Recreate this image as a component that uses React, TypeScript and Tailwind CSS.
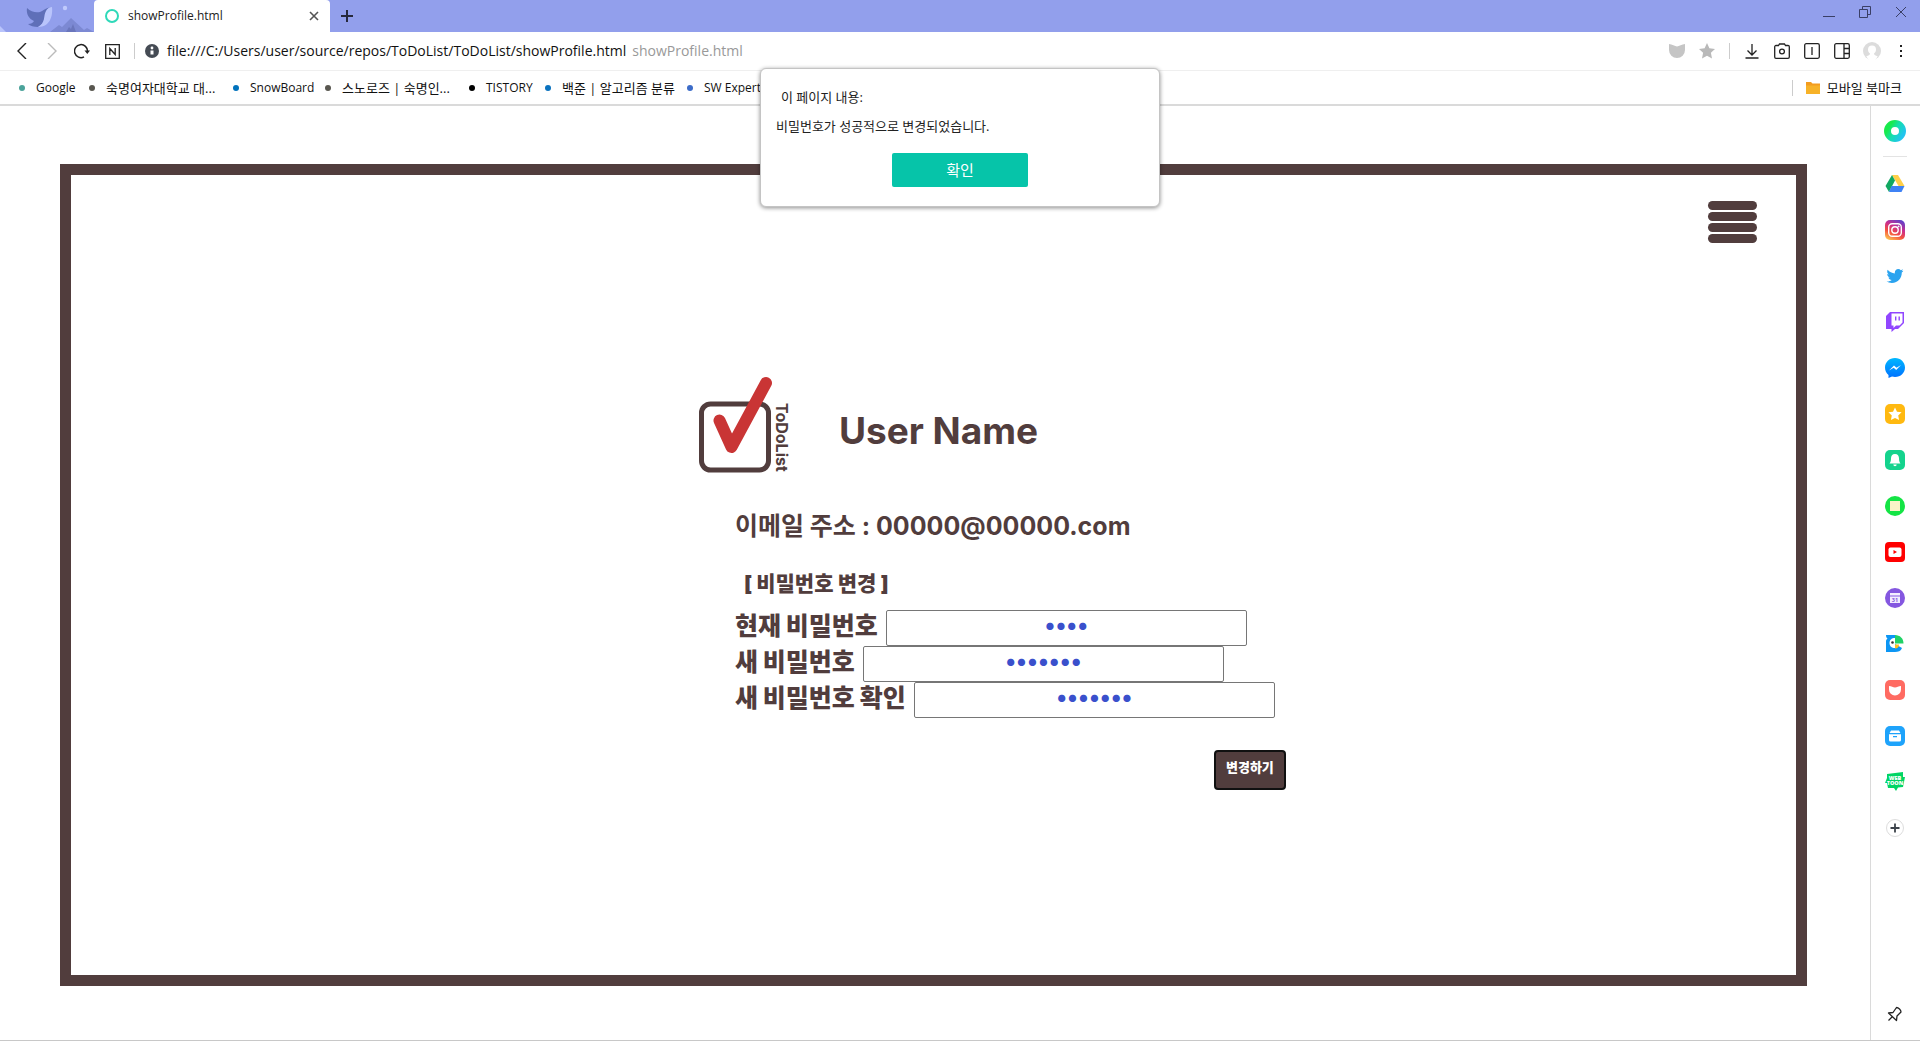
import React from "react";
import { FaTwitter } from "react-icons/fa";

const UI_FONT = "font-['Open_Sans','Noto_Sans_CJK_KR',sans-serif]";
const PAGE_FONT = "font-['Inter','Noto_Sans_CJK_KR',sans-serif]";

function TabBar() {
  return (
    <header className="flex h-8 bg-[#929fec]">
      <svg className="h-8 w-[94px] shrink-0" viewBox="0 0 94 32" aria-hidden="true">
        <path d="M0 26l6 6H0z" fill="#b9c4fb" />
        <path d="M50 32l9-7 3 2 9-9 13 12 3-2 7 4z" fill="#7c89d3" />
        <path d="M66 32l3-5 2 2 2-5 3 8z" fill="#6a76bc" />
        <circle cx="65" cy="8" r="2.2" fill="#c0cafc" />
        <path d="M27 8c4 4 9 5 13 4 3-1 5-4 12-5-6 3-6 8-8 13-1 3-3 5-6 7-4 0-8-1-10-3 3 0 5-1 6-3-5-2-8-7-7-13z" fill="#5f6fb8" />
        <path d="M52 7c1 9-2 20-14 20 8-4 5-11 8-16 1-2 3-4 6-4z" fill="#b9c4fb" />
      </svg>
      <div className="flex w-[236px] items-center rounded-t bg-white pl-[11px] pr-2.5">
        <span className="size-3.5 rounded-full border-2 border-[#2fd9b9]" />
        <span className="ml-[9px] flex-1 text-xs leading-4 text-[#222]">showProfile.html</span>
        <button aria-label="Close tab">
          <svg className="size-3" viewBox="0 0 12 12" stroke="#555" strokeWidth="1.6">
            <path d="M2 2l8 8M10 2l-8 8" />
          </svg>
        </button>
      </div>
      <button aria-label="New tab" className="ml-2.5">
        <svg className="size-3.5" viewBox="0 0 14 14" stroke="#26283c" strokeWidth="2">
          <path d="M7 1v12M1 7h12" />
        </svg>
      </button>
      <div className="ml-auto flex h-6 items-center gap-6 pr-[13px]">
        <button aria-label="Minimize">
          <svg className="size-3" viewBox="0 0 12 12" stroke="#3a3f66" strokeWidth="1">
            <path d="M0 10.5h12" />
          </svg>
        </button>
        <button aria-label="Restore">
          <svg className="size-3" viewBox="0 0 12 12" fill="none" stroke="#3a3f66">
            <path d="M.5 3.5h8v8h-8zM3.500 3.500v-3h8v8h-3" />
          </svg>
        </button>
        <button aria-label="Close">
          <svg className="size-3" viewBox="0 0 12 12" stroke="#3a3f66">
            <path d="M1 1l10 10M11 1L1 11" />
          </svg>
        </button>
      </div>
    </header>
  );
}

function AddressBar() {
  return (
    <div className="flex h-[39px] items-center border-b border-[#efefef] pl-3.5 pr-3">
      <button aria-label="Back">
        <svg className="size-4" viewBox="0 0 16 16" fill="none" stroke="#222" strokeWidth="1.4">
          <path d="M12 0L4 8l8 8" />
        </svg>
      </button>
      <button aria-label="Forward" className="ml-3.5">
        <svg className="size-4" viewBox="0 0 16 16" fill="none" stroke="#bbb" strokeWidth="1.400">
          <path d="M4 0l8 8-8 8" />
        </svg>
      </button>
      <button aria-label="Reload" className="ml-3.5">
        <svg className="size-4" viewBox="0 0 16 16" fill="none" stroke="#222" strokeWidth="1.500">
          <path d="M10 13.900A6.500 6.500 0 1 1 13.500 8.500" />
          <path d="M10.500 7.500h5.500l-2.700 3.500z" fill="#222" stroke="none" />
        </svg>
      </button>
      <button aria-label="Naver" className="ml-[15px]">
        <svg className="size-[15px]" viewBox="0 0 15 15" fill="none" stroke="#222" strokeWidth="1.300">
          <path d="M.700.700h13.600v13.600H.700zM4.800 11V4.500l5.400 6V4" />
        </svg>
      </button>
      <span className="ml-3.5 h-4 w-px bg-[#ccc]" />
      <svg className="ml-2.5 size-3.5" viewBox="0 0 14 14" aria-hidden="true">
        <circle cx="7" cy="7" r="7" fill="#454b54" />
        <circle cx="7" cy="4" r="1.400" fill="#fff" />
        <path d="M5.500 6.500h3v4h-3z" fill="#fff" />
      </svg>
      <div className="ml-2 flex flex-1 gap-1.5 text-sm leading-5 whitespace-nowrap">
        <span className="text-[#111]">file:///C:/Users/user/source/repos/ToDoList/ToDoList/showProfile.html</span>
        <span className="text-[#999]">showProfile.html</span>
      </div>
      <div className="flex items-center gap-3.5">
        <button aria-label="Whale">
          <svg className="size-4" viewBox="0 0 16 16" fill="#c5c5c5">
            <path d="M0 1c3 0 6 2.500 8 2.500S13 1 16 1v6a8 8 0 0 1-16 0z" />
          </svg>
        </button>
        <button aria-label="Bookmark">
          <svg className="size-4" viewBox="0 0 16 16" fill="#b9b9b9">
            <path d="M8 0l2.400 5.200 5.600.700-4.100 3.900 1.100 5.700L8 12.700l-5 2.800 1.100-5.700L0 5.900l5.600-.700z" />
          </svg>
        </button>
        <span className="h-4 w-px bg-[#ccc]" />
        <button aria-label="Downloads">
          <svg className="size-4" viewBox="0 0 16 16" fill="none" stroke="#222" strokeWidth="1.300">
            <path d="M8 1v10.500M3.500 7.500L8 12l4.500-4.500M1.500 15h13" />
          </svg>
        </button>
        <button aria-label="Capture">
          <svg className="size-4" viewBox="0 0 16 16" fill="none" stroke="#222" strokeWidth="1.300">
            <path d="M2 2.500h2.500L5.500 1h5l1 1.500H14a1.300 1.300 0 0 1 1.300 1.300V14a1.300 1.300 0 0 1-1.300 1.300H2A1.300 1.300 0 0 1 .700 14V3.800A1.300 1.300 0 0 1 2 2.500z" />
            <circle cx="8" cy="8.500" r="2.400" />
          </svg>
        </button>
        <button aria-label="Side view">
          <svg className="size-4" viewBox="0 0 16 16" fill="none" stroke="#222" strokeWidth="1.300">
            <rect x=".7" y=".7" width="14.600" height="14.600" rx="1.500" />
            <path d="M8 4v8" />
          </svg>
        </button>
        <button aria-label="Sidebar">
          <svg className="size-4" viewBox="0 0 16 16" fill="none" stroke="#222" strokeWidth="1.300">
            <rect x=".7" y=".7" width="14.600" height="14.600" rx="1.500" />
            <path d="M10 1v14M10 5.500h5M10 10.500h5" />
          </svg>
        </button>
        <button aria-label="Profile" className="-mx-px">
          <svg className="size-[18px]" viewBox="0 0 18 18">
            <circle cx="9" cy="9" r="9" fill="#dcdcdc" />
            <path d="M9 3.500a4 4 0 0 1 4 4c0 2-.8 3.300-2 4 0 1.600 1.500 2 3.800 3L12 18H6l-2.800-3.500c2.300-1 3.800-1.400 3.800-3-1.200-.700-2-2-2-4a4 4 0 0 1 4-4z" fill="#fff" />
          </svg>
        </button>
        <button aria-label="Menu" className="-mx-px">
          <svg className="h-4 w-4" viewBox="0 0 16 16" fill="#222">
            <path d="M7 2h2v2H7zM7 7h2v2H7zM7 12h2v2H7z" />
          </svg>
        </button>
      </div>
    </div>
  );
}

const bookmarks = [
  { label: "Google", dot: "bg-[#4ba39a]", style: "w-[70px] text-xs" },
  { label: "숙명여자대학교 대...", dot: "bg-[#595750]", style: "w-36 text-[13px]" },
  { label: "SnowBoard", dot: "bg-[#0072bc]", style: "w-[92px] text-xs" },
  { label: "스노로즈 | 숙명인...", dot: "bg-[#595750]", style: "w-36 text-[13px]" },
  { label: "TISTORY", dot: "bg-black", style: "w-[76px] text-xs" },
  { label: "백준 | 알고리즘 분류", dot: "bg-[#0a72bf]", style: "w-[142px] text-[13px]" },
  { label: "SW Expert", dot: "bg-[#3c6cc8]", style: "w-[76px] text-xs" },
];

function BookmarkBar() {
  return (
    <nav className="flex h-[35px] items-center border-b-2 border-[#dadada] pl-[19px] pr-[18px] leading-4 text-[#111]">
      {bookmarks.map((b) => (
        <a key={b.label} href="#" className={`flex shrink-0 items-center gap-[11px] leading-4 whitespace-nowrap ${b.style}`}>
          <span className={`size-1.5 shrink-0 rounded-full ${b.dot}`} />
          {b.label}
        </a>
      ))}
      <span className="ml-auto h-4 w-px bg-[#ccc]" />
      <a href="#" className="ml-[13px] flex items-center gap-[7px] text-[13px] leading-4">
        <svg className="h-3 w-3.5" viewBox="0 0 14 12" aria-hidden="true">
          <path d="M0 0h5l1.500 1.500H14V12H0z" fill="#f39c1f" />
          <path d="M0 3.500h14V12H0z" fill="#f7b228" />
        </svg>
        모바일 북마크
      </a>
    </nav>
  );
}

function AlertDialog() {
  return (
    <div
      role="dialog"
      aria-label="이 페이지 내용:"
      className="absolute left-1/2 top-[68px] w-[400px] -translate-x-1/2 rounded-md border border-[#c4c4c4] bg-white px-[15px] pb-[19px] pt-5 text-[13px] leading-4 text-[#222] shadow-[0_1px_4px_rgba(0,0,0,0.45)]"
    >
      <p className="pl-[5px]">이 페이지 내용:</p>
      <p className="mt-[13px]">비밀번호가 성공적으로 변경되었습니다.</p>
      <button className="mx-auto mt-[19px] block h-[34px] w-[136px] rounded-xs bg-[#06c4a9] text-[15px] text-white">확인</button>
    </div>
  );
}

const sideIcons: { name: string; icon: React.ReactNode }[] = [
  {
    name: "Google Drive",
    icon: (
      <>
        <path d="M7 1h6l6.500 11h-6z" fill="#ffcf48" />
        <path d="M7 1l3 5.500L4 18 .5 12z" fill="#11a861" />
        <path d="M6.500 12h13L16.500 18H4z" fill="#3f82f5" />
      </>
    ),
  },
  {
    name: "Instagram",
    icon: (
      <>
        <defs>
          <linearGradient id="ig" x1="0.2" y1="1" x2="0.700" y2="0">
            <stop offset="0" stopColor="#fdc350" />
            <stop offset=".35" stopColor="#f4513f" />
            <stop offset=".65" stopColor="#cc2e8d" />
            <stop offset="1" stopColor="#6540c8" />
          </linearGradient>
        </defs>
        <rect width="20" height="20" rx="5" fill="url(#ig)" />
        <rect x="3.700" y="3.700" width="12.600" height="12.600" rx="3.500" fill="none" stroke="#fff" strokeWidth="1.400" />
        <circle cx="10" cy="10" r="3.200" fill="none" stroke="#fff" strokeWidth="1.400" />
        <circle cx="13.600" cy="6.400" r=".9" fill="#fff" />
      </>
    ),
  },
  { name: "Twitter", icon: <FaTwitter x="1.500" y="1.500" size={17} color="#2aa3ef" /> },
  {
    name: "Twitch",
    icon: (
      <>
        <path d="M5 0h14v11l-6 6h-3l-3.500 3v-3H1V4z" fill="#9146ff" />
        <path d="M6.500 1.500h11v9l-3 3H11l-2.500 2.500v-2.500h-2z" fill="#fff" />
        <path d="M10 4.500h1.400V8.500H10zM13.500 4.500h1.400V8.500h-1.400z" fill="#9146ff" />
      </>
    ),
  },
  {
    name: "Messenger",
    icon: (
      <>
        <defs>
          <linearGradient id="ms" x1="0" y1="0" x2="0" y2="1">
            <stop offset="0" stopColor="#00b8ff" />
            <stop offset="1" stopColor="#0070ff" />
          </linearGradient>
        </defs>
        <path d="M10 0c5.700 0 10 4.200 10 9.500S15.700 19 10 19c-1 0-2-.1-3-.4L3.500 20v-3C1.300 15.200 0 12.600 0 9.500 0 4.200 4.300 0 10 0z" fill="url(#ms)" />
        <path d="M4 12.500l5-5 2.500 2.200L16 7l-4.800 5-2.500-2.200z" fill="#fff" />
      </>
    ),
  },
  {
    name: "Favorites",
    icon: (
      <>
        <rect width="20" height="20" rx="5" fill="#ffb910" />
        <path d="M10 3.500l2 4.200 4.600.6-3.400 3.200.9 4.600-4.100-2.200-4.100 2.200.9-4.600-3.400-3.200 4.600-.6z" fill="#fff" />
      </>
    ),
  },
  {
    name: "Notifications",
    icon: (
      <>
        <rect width="20" height="20" rx="5" fill="#14d38d" />
        <path d="M10 4c2.800 0 4 2 4 4.300 0 2.700.4 3.700 1.500 5.200h-11C5.600 12 6 11 6 8.300 6 6 7.200 4 10 4zM8.300 14.500h3.400a1.700 1.700 0 0 1-3.400 0z" fill="#fff" />
      </>
    ),
  },
  {
    name: "Memo",
    icon: (
      <>
        <circle cx="10" cy="10" r="10" fill="#14e445" />
        <rect x="5" y="5" width="10" height="10" fill="#faf3c8" />
      </>
    ),
  },
  {
    name: "YouTube",
    icon: (
      <>
        <rect width="20" height="20" rx="4" fill="#f00" />
        <rect x="3.500" y="5.500" width="13" height="9.500" rx="2" fill="#fff" />
        <path d="M8.500 8v4l3.500-2z" fill="#f00" />
      </>
    ),
  },
  {
    name: "Calendar",
    icon: (
      <>
        <circle cx="10" cy="10" r="10" fill="#8457e0" />
        <path d="M5 5h10v2.500H5zM5 8.500h10V15H5z" fill="#f3edff" />
        <text x="10" y="14" textAnchor="middle" fontSize="5.500" fontWeight="700" fill="#8457e0">31</text>
      </>
    ),
  },
  {
    name: "Papago",
    icon: (
      <>
        <path d="M1 1h9v9l7 4c-1 3-4 4-7 4H1V7c0-1 1-2 1.500-2.500C1.500 4 1 3 1 1z" fill="#0c96f4" />
        <path d="M10 4v10c-3.500 0-5.500-2-5.500-5S6.500 4 10 4z" fill="#fff" />
        <circle cx="7.500" cy="8.500" r="1.300" fill="#333" />
        <path d="M10 1c5 0 8.500 3.500 8.500 8.500H10z" fill="#20d266" />
        <path d="M10 10.500h4c0 2.500-1.500 4-4 4z" fill="#ffbf1c" />
      </>
    ),
  },
  {
    name: "Whale",
    icon: (
      <>
        <rect width="20" height="20" rx="5" fill="#ff6b62" />
        <path d="M4 6c2.500 0 4 1.500 6 1.500S13.500 6 16 6v3.500a6 6 0 0 1-12 0z" fill="#fff" />
      </>
    ),
  },
  {
    name: "Archive",
    icon: (
      <>
        <rect width="20" height="20" rx="5" fill="#1ea3fb" />
        <path d="M6 4.500h8l2 3.500v6a1.500 1.500 0 0 1-1.500 1.500h-9A1.500 1.500 0 0 1 4 14V8z" fill="#fff" />
        <path d="M4 7.700h12M8 10.700h4" stroke="#1ea3fb" strokeWidth="1.200" />
      </>
    ),
  },
  {
    name: "Webtoon",
    icon: (
      <>
        <path d="M2 2l16-2v5h2l-2 10-5 .5-2 3.500-2-3H3l-1-5H0l2-5z" fill="#00d564" />
        <text x="10" y="8" textAnchor="middle" fontSize="5.500" fontWeight="800" fill="#fff">WEB</text>
        <text x="10" y="13" textAnchor="middle" fontSize="5.500" fontWeight="800" fill="#fff">TOON</text>
      </>
    ),
  },
  {
    name: "Add",
    icon: (
      <>
        <circle cx="10" cy="10" r="8.500" fill="#fff" stroke="#ddd" />
        <path d="M10 5.500v9M5.500 10h9" stroke="#3c434b" strokeWidth="1.800" />
      </>
    ),
  },
];

function Sidebar() {
  return (
    <aside className="flex w-[50px] shrink-0 flex-col items-center border-l border-[#dadada] bg-white pr-px">
      <button aria-label="Home" className="grid h-[50px] place-items-center">
        <svg className="size-[22px]" viewBox="0 0 22 22">
          <defs>
            <linearGradient id="home" x1="0" y1="0.200" x2="1" y2="0.800">
              <stop offset="0.100" stopColor="#18ea4c" />
              <stop offset="0.500" stopColor="#14deb0" />
              <stop offset="1" stopColor="#22c4ee" />
            </linearGradient>
          </defs>
          <circle cx="11" cy="11" r="7.500" fill="none" stroke="url(#home)" strokeWidth="7" />
        </svg>
      </button>
      <hr className="mb-1 w-6 border-[#e3e3e3]" />
      {sideIcons.map((s) => (
        <button key={s.name} aria-label={s.name} className="grid h-[46px] place-items-center">
          <svg className="size-5" viewBox="0 0 20 20">{s.icon}</svg>
        </button>
      ))}
      <button aria-label="Pin" className="mb-[18px] mt-auto">
        <svg className="size-4" viewBox="0 0 16 16" fill="none" stroke="#222" strokeWidth="1.300" strokeLinejoin="round">
          <path d="M9.500 1.500c2 0 4.500 2.500 4.500 4.500L10 10l-.5 4.500L1.500 7l4.500-.5zM5 11l-3.500 3.500" />
        </svg>
      </button>
    </aside>
  );
}

function Logo() {
  return (
    <svg className="h-24 w-[90px] shrink-0 overflow-visible" viewBox="0 0 90 96" role="img" aria-label="ToDoList">
      <rect x="2.500" y="27" width="67" height="66" rx="9" fill="none" stroke="#513d3d" strokeWidth="5" />
      <path d="M20.500 43.500L32.500 70 67 6" fill="none" stroke="#c93535" strokeWidth="12" strokeLinecap="round" strokeLinejoin="round" />
      <text transform="translate(77 26) rotate(90)" fontSize="16" fontWeight="700" fill="#513d3d">ToDoList</text>
    </svg>
  );
}

const fields = [
  { id: "current", label: "현재 비밀번호", value: "1234" },
  { id: "next", label: "새 비밀번호", value: "1234567" },
  { id: "confirm", label: "새 비밀번호 확인", value: "1234567" },
];

function Profile() {
  return (
    <main className={`mb-[54px] ml-[60px] mr-[63px] mt-[58px] flex-1 border-[11px] border-[#513d3d] font-bold text-[#513d3d] ${PAGE_FONT}`}>
      <div className="flex justify-end pr-[39px] pt-[26px]">
        <button aria-label="Open menu" className="flex w-[49px] flex-col gap-0.5">
          <span className="h-[9px] rounded-full bg-[#513d3d]" />
          <span className="h-[9px] rounded-full bg-[#513d3d]" />
          <span className="h-[9px] rounded-full bg-[#513d3d]" />
          <span className="h-[9px] rounded-full bg-[#513d3d]" />
        </button>
      </div>
      <div className="pl-[36.4%] pt-[134px]">
        <div className="w-[587px]">
          <div className="flex items-center gap-[50px]">
            <Logo />
            <h1 className="pt-3 text-[37px] leading-10">User Name</h1>
          </div>
          <form className="pl-9">
            <h2 className="mt-[35px] text-[25px] leading-9">이메일 주소 : 00000@00000.com</h2>
            <h3 className="mt-[26px] pl-[9px] text-[21px] leading-7 font-black">[ 비밀번호 변경 ]</h3>
            <div className="mt-3">
              {fields.map((f) => (
                <div key={f.id} className="flex h-9 items-center gap-2">
                  <label htmlFor={f.id} className="whitespace-nowrap pb-1 text-[25px] leading-8 font-black">{f.label}</label>
                  <input
                    id={f.id}
                    type="password"
                    defaultValue={f.value}
                    className="h-9 w-[361px] rounded-xs border border-[#767676] bg-white pb-1.5 text-center text-[23px] text-[#3a50cc] outline-none"
                  />
                </div>
              ))}
            </div>
            <div className="mt-8 flex justify-end">
              <button type="button" className="h-10 w-[72px] rounded border-2 border-[#101010] bg-[#513d3d] pb-1 text-[13px] font-black text-white">
                변경하기
              </button>
            </div>
          </form>
        </div>
      </div>
    </main>
  );
}

export default function App() {
  return (
    <div className={`relative flex min-h-screen flex-col border-b border-[#c8c8c8] bg-white ${UI_FONT}`}>
      <TabBar />
      <AddressBar />
      <BookmarkBar />
      <div className="flex flex-1">
        <Profile />
        <Sidebar />
      </div>
      <AlertDialog />
    </div>
  );
}
